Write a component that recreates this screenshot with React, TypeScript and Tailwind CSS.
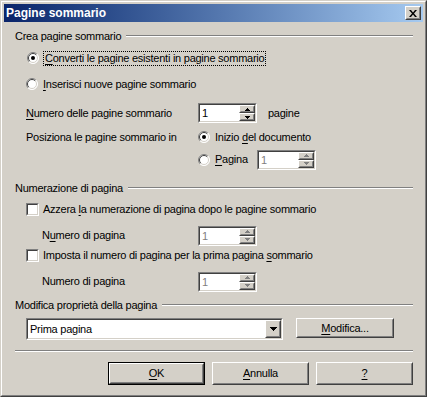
import React from "react";

const font = "font-['Tahoma','Liberation_Sans',sans-serif] text-[11px] leading-[13px] tracking-[-0.25px] text-black";

const Raised = ({ className = "", children, def = false }: { className?: string; children?: React.ReactNode; def?: boolean }) => (
  <div className={`${def ? "border border-black" : ""} ${className} flex`}>
    <div className="flex-1 flex border border-t-white border-l-white border-r-[#404040] border-b-[#404040]">
      <div className="flex-1 flex items-center justify-center border border-t-[#d4d0c8] border-l-[#d4d0c8] border-r-[#808080] border-b-[#808080] bg-[#d4d0c8]">
        {children}
      </div>
    </div>
  </div>
);

const Sunken = ({ className = "", children }: { className?: string; children?: React.ReactNode }) => (
  <div className={`flex border border-t-[#808080] border-l-[#808080] border-r-white border-b-white ${className}`}>
    <div className="flex-1 flex border border-t-[#404040] border-l-[#404040] border-r-[#d4d0c8] border-b-[#d4d0c8] bg-white">
      {children}
    </div>
  </div>
);

const Arrow = ({ up, disabled }: { up?: boolean; disabled?: boolean }) => (
  <svg width="5" height="3" viewBox="0 0 5 3" className="block">
    <path
      d={up ? "M2 0h1v1h1v1h1v1H0V2h1V1h1z" : "M0 0h5v1H4v1H3v1H2V2H1V1H0z"}
      fill={disabled ? "#808080" : "#000"}
    />
  </svg>
);

const Spin = ({ value, disabled, className = "" }: { value: string; disabled?: boolean; className?: string }) => (
  <Sunken className={`h-[20px] ${className}`}>
    <span className={`flex-1 pl-[2px] pt-[2px] ${disabled ? "text-[#808080]" : ""}`}>{value}</span>
    <div className="w-[16px] flex flex-col">
      <Raised className="h-[8px]">
        <Arrow up disabled={disabled} />
      </Raised>
      <Raised className="h-[8px]">
        <Arrow disabled={disabled} />
      </Raised>
    </div>
  </Sunken>
);

const Radio = ({ checked }: { checked?: boolean }) => (
  <svg width="12" height="12" viewBox="0 0 12 12" className="block shrink-0">
    <circle cx="6" cy="6" r="5.5" fill="#fff" />
    <path d="M2.1 9.9A5.5 5.5 0 0 1 9.9 2.1" stroke="#808080" fill="none" />
    <path d="M9.9 2.1A5.5 5.5 0 0 1 2.1 9.9" stroke="#fff" fill="none" />
    <path d="M2.8 9.2A4.5 4.5 0 0 1 9.2 2.8" stroke="#404040" fill="none" />
    <path d="M9.2 2.8A4.5 4.5 0 0 1 2.8 9.2" stroke="#d4d0c8" fill="none" />
    {checked && <circle cx="6" cy="6" r="2" fill="#000" />}
  </svg>
);

const Check = () => (
  <Sunken className="w-[13px] h-[13px] shrink-0" />
);

const Group = ({ label }: { label: string }) => (
  <div className="h-[14px] flex items-center pl-[11px] pr-[10px] gap-[5px]">
    <span className="whitespace-nowrap">{label}</span>
    <div className="flex-1 flex flex-col">
      <div className="h-px bg-[#808080]" />
      <div className="h-px bg-white" />
    </div>
  </div>
);

const U = ({ children }: { children: React.ReactNode }) => <span className="underline underline-offset-[2px]">{children}</span>;

export default function App() {
  return (
    <div className={`w-[427px] h-[397px] bg-[#d4d0c8] border border-t-[#d4d0c8] border-l-[#d4d0c8] border-r-[#404040] border-b-[#404040] ${font}`}>
      <div className="h-full border border-t-white border-l-white border-r-[#808080] border-b-[#808080] p-[2px] flex flex-col">
        {/* title bar */}
        <div className="h-[18px] flex items-center bg-gradient-to-r from-[#0a246a] to-[#a6caf0] pl-[2px] pr-[2px]">
          <span className="flex-1 text-white font-bold text-[12px] tracking-normal">Pagine sommario</span>
          <Raised className="w-[16px] h-[14px]">
            <svg width="8" height="7" viewBox="0 0 8 7" className="block">
              <path d="M0 0h2l2 2.5L6 0h2L5 3.5 8 7H6L4 4.5 2 7H0l3-3.5z" fill="#000" />
            </svg>
          </Raised>
        </div>

        <div className="mt-[7px]">
          <Group label="Crea pagine sommario" />
        </div>

        <div className="mt-[7px] h-[16px] flex items-center pl-[23px]">
          <Radio checked />
          <span className="ml-[4px] border border-dotted border-black px-[1px] h-[15px] leading-[13px]">
            <U>C</U>onverti le pagine esistenti in pagine sommario
          </span>
        </div>

        <div className="mt-[10px] h-[16px] flex items-center pl-[22px]">
          <Radio />
          <span className="ml-[5px]"><U>I</U>nserisci nuove pagine sommario</span>
        </div>

        <div className="mt-[11px] h-[20px] flex items-center pl-[22px]">
          <span className="w-[172px]"><U>N</U>umero delle pagine sommario</span>
          <Spin value="1" className="w-[59px]" />
          <span className="ml-[11px]">pagine</span>
        </div>

        <div className="mt-[6px] h-[16px] flex items-center pl-[22px]">
          <span className="w-[172px]">Posiziona le pagine sommario in</span>
          <Radio checked />
          <span className="ml-[5px]">Inizio <U>d</U>el documento</span>
        </div>

        <div className="mt-[5px] h-[19px] flex items-center pl-[194px]">
          <Radio />
          <span className="ml-[5px] w-[42px]"><U>P</U>agina</span>
          <Spin value="1" disabled className="w-[59px]" />
        </div>

        <div className="mt-[12px]">
          <Group label="Numerazione di pagina" />
        </div>

        <div className="mt-[6px] h-[16px] flex items-center pl-[22px]">
          <Check />
          <span className="ml-[4px]">Azzera <U>l</U>a numerazione di pagina dopo le pagine sommario</span>
        </div>

        <div className="mt-[9px] h-[19px] flex items-center pl-[38px]">
          <span className="w-[156px]">N<U>u</U>mero di pagina</span>
          <Spin value="1" disabled className="w-[59px] h-[19px]" />
        </div>

        <div className="mt-[2px] h-[16px] flex items-center pl-[22px]">
          <Check />
          <span className="ml-[4px]">Imposta il numero di pagina per la prima pagina <U>s</U>ommario</span>
        </div>

        <div className="mt-[9px] h-[19px] flex items-center pl-[38px]">
          <span className="w-[156px]">Numero di pagina</span>
          <Spin value="1" disabled className="w-[59px] h-[19px]" />
        </div>

        <div className="mt-[7px]">
          <Group label="Modifica proprietà della pagina" />
        </div>

        <div className="mt-[6px] h-[22px] flex items-start pl-[22px]">
          <Sunken className="w-[257px] h-[22px]">
            <span className="flex-1 pl-[2px] pt-[3px]">Prima pagina</span>
            <Raised className="w-[16px] h-[18px]">
              <svg width="7" height="4" viewBox="0 0 7 4" className="block">
                <path d="M0 0h7v1H6v1H5v1H4v1H3V3H2V2H1V1H0z" fill="#000" />
              </svg>
            </Raised>
          </Sunken>
          <Raised className="ml-[13px] w-[98px] h-[20px]">
            <span><U>M</U>odifica...</span>
          </Raised>
        </div>

        <div className="mt-[10px] ml-[11px] mr-[10px] flex flex-col">
          <div className="h-px bg-[#808080]" />
          <div className="h-px bg-white" />
        </div>

        <div className="mt-[10px] h-[23px] flex justify-end gap-[7px] pr-[10px]">
          <Raised def className="w-[97px] h-[23px]">
            <span><U>O</U>K</span>
          </Raised>
          <Raised className="w-[97px] h-[23px]">
            <span><U>A</U>nnulla</span>
          </Raised>
          <Raised className="w-[97px] h-[23px]">
            <span><U>?</U></span>
          </Raised>
        </div>
      </div>
    </div>
  );
}
